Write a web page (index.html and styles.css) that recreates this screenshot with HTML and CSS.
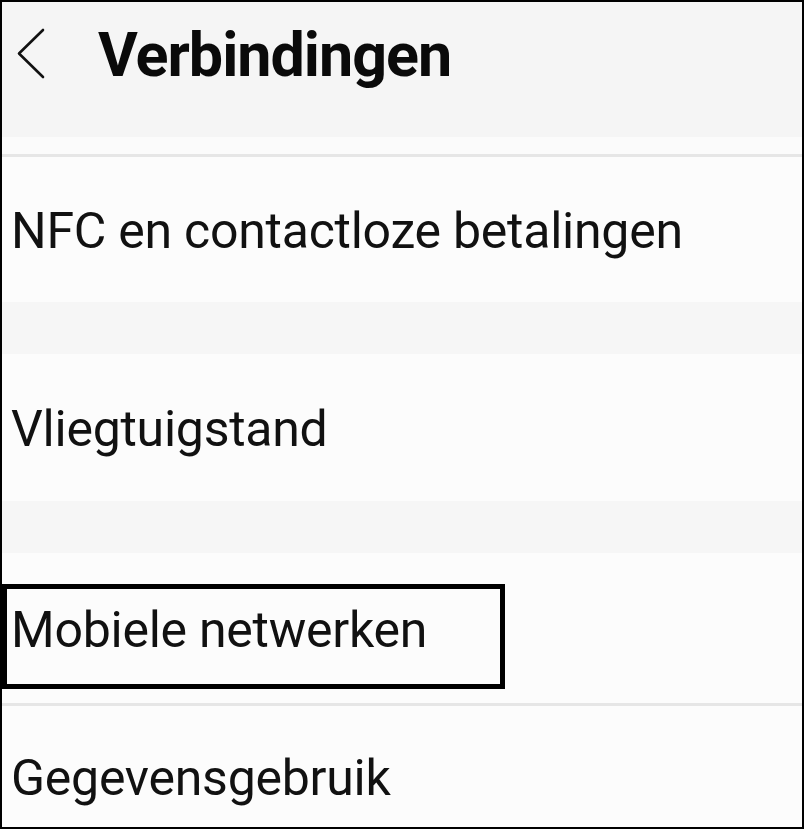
FILE: index.html
```html
<!DOCTYPE html>
<html>
<head>
    <meta charset="utf-8" />
    <title>Verbindingen</title>
    <link rel="stylesheet" href="styles.css">
</head>
<body>
<div class="screen">
    <div class="topbar">
        <svg class="back" width="30" height="52" viewBox="0 0 30 52">
            <polyline points="27,2 3,25.5 27,49" fill="none" stroke="#111" stroke-width="2.6" stroke-linecap="round" stroke-linejoin="round"/>
        </svg>
        <h1 class="title">Verbindingen</h1>
    </div>
    <div class="strip"></div>
    <ul class="menu">
        <li class="item item-first">NFC en contactloze betalingen</li>
        <li class="gap"></li>
        <li class="item">Vliegtuigstand</li>
        <li class="gap"></li>
        <li class="item item-mobile">
            Mobiele netwerken
            <span class="mark"></span>
        </li>
        <li class="item item-last">Gegevensgebruik</li>
    </ul>
</div>
</body>
</html>
```

FILE: styles.css
```css
* {
    margin: 0;
    padding: 0;
    box-sizing: border-box;
}
body {
    background: #fff;
    font-family: Roboto, "Liberation Sans", sans-serif;
    color: #111;
}
/* 外框 */
.screen {
    width: 804px;
    height: 829px;
    border: 2px solid #000;
    background: #fcfcfc;
    overflow: hidden;
}
.topbar {
    display: flex;
    align-items: flex-start;
    height: 135px;
    padding: 23px 0 0 14px;
    background: #f5f5f5;
}
.topbar .back {
    display: block;
    margin-top: 3px;
}
.topbar .title {
    margin-left: 52px;
    font-size: 61px;
    line-height: 61px;
    font-weight: 700;
    letter-spacing: -1px;
    color: #0a0a0a;
}
.strip {
    height: 20px;
    background: #fbfbfb;
    border-bottom: 3px solid #e6e6e6;
}
.menu {
    list-style: none;
}
.menu .item {
    position: relative;
    display: flex;
    align-items: center;
    height: 147px;
    padding: 3px 0 0 9px;
    font-size: 50px;
    line-height: 50px;
    letter-spacing: -0.25px;
    white-space: nowrap;
    background: #fcfcfc;
}
.menu .item-first {height: 145px;}
.menu .item-mobile {
    height: 153px;
    padding-top: 4px;
    border-bottom: 3px solid #e6e6e6;
}
.menu .item-last {height: 130px; padding-top: 14px;}
.menu .gap {
    height: 52px;
    background: #f6f6f6;
}
/* 选中框 */
.menu .mark {
    position: absolute;
    left: 0;
    top: 31px;
    width: 503px;
    height: 105px;
    border: 5px solid #000;
}
```
